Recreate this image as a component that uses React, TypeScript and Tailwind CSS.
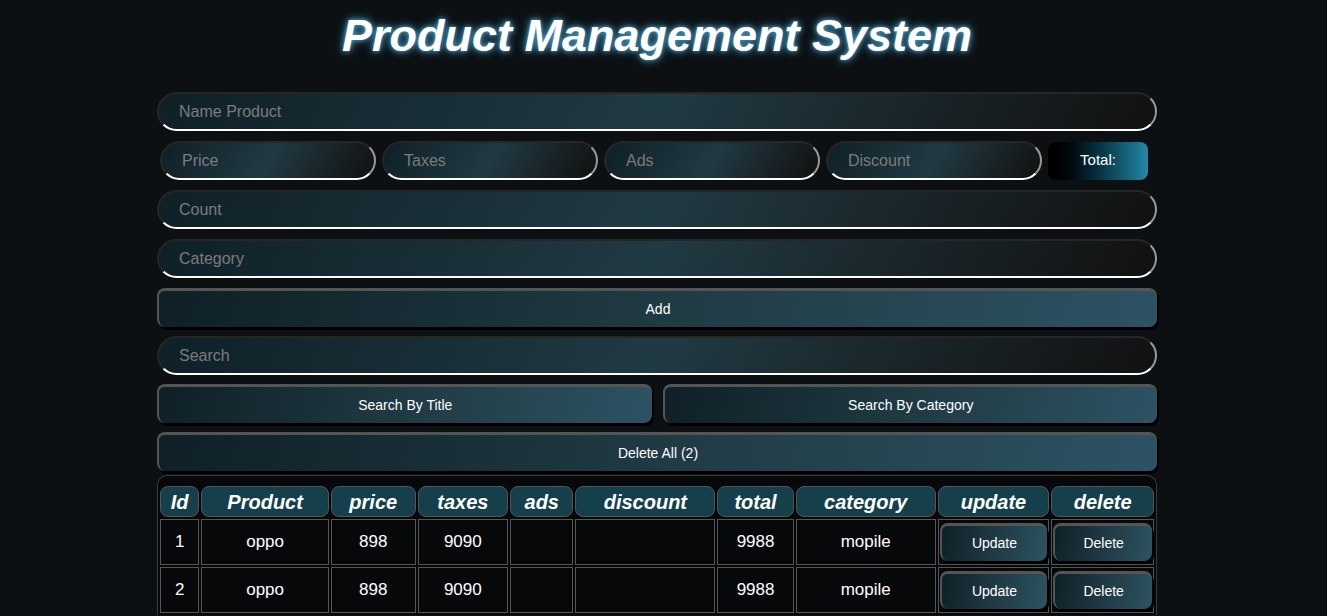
import { useState } from "react";

type Product = {
  id: number;
  title: string;
  price: string;
  taxes: string;
  ads: string;
  discount: string;
  total: string;
  category: string;
};

const inputCls =
  "h-[39px] rounded-[20px] border-2 border-t-[#262626] border-l-[#262626] border-r-[#9a9a9a] border-b-white bg-linear-120 from-[#0f2027] via-[#203a43] to-[#111] px-5 text-[16px] text-white placeholder:text-[#7b7b7b] outline-none";

const btnCls =
  "h-[39px] rounded-lg border-t-[3px] border-l-[2px] border-[#555] bg-linear-100 from-[#0f2027] via-[#203a43] to-[#2c5364] text-[14px] text-white shadow-[2px_3px_0_#000]";

const headers = ["Id", "Product", "price", "taxes", "ads", "discount", "total", "category", "update", "delete"];
const widths = ["w-[39px]", "w-[127px]", "w-[84px]", "w-[90px]", "w-[63px]", "w-[139px]", "w-[76px]", "w-[139px]", "w-[111px]", "w-[102px]"];

export default function App() {
  const [products] = useState<Product[]>([
    { id: 1, title: "oppo", price: "898", taxes: "9090", ads: "", discount: "", total: "9988", category: "mopile" },
    { id: 2, title: "oppo", price: "898", taxes: "9090", ads: "", discount: "", total: "9988", category: "mopile" },
  ]);

  return (
    <div className="min-h-screen bg-[#0c1012] pr-[13px] font-['Liberation_Sans',Arial,sans-serif]">
      <div className="mx-auto w-[1000px]">
        <h1 className="pt-[8px] pb-[28px] text-center text-[45px] leading-[56px] font-bold italic text-white [text-shadow:0_0_10px_rgba(70,170,220,0.9),0_0_4px_rgba(120,200,240,0.7)]">
          Product Management System
        </h1>

        <div className="flex flex-col gap-[10px]">
          <input className={inputCls} placeholder="Name Product" />

          <div className="flex items-center gap-[6px] px-[3px]">
            <input className={inputCls + " w-[216px]"} placeholder="Price" />
            <input className={inputCls + " w-[216px]"} placeholder="Taxes" />
            <input className={inputCls + " w-[216px]"} placeholder="Ads" />
            <input className={inputCls + " w-[216px]"} placeholder="Discount" />
            <div className="flex h-[38px] w-[100px] items-center justify-center rounded-lg bg-linear-to-r from-black to-[#2389a9] text-[15px] text-white">
              Total:
            </div>
          </div>

          <input className={inputCls} placeholder="Count" />
          <input className={inputCls} placeholder="Category" />
          <button className={btnCls}>Add</button>
        </div>

        <div className="mt-[9px] flex flex-col gap-[9px]">
          <input className={inputCls} placeholder="Search" />
          <div className="flex gap-[11px]">
            <button className={btnCls + " flex-1"}>Search By Title</button>
            <button className={btnCls + " flex-1"}>Search By Category</button>
          </div>
          <button className={btnCls}>Delete All ({products.length})</button>
        </div>

        <div className="mt-[4px] rounded-tl-[10px] rounded-tr-[10px] border border-b-0 border-[#3a3a3a] bg-[#07080a] pt-[8px]">
          <table className="w-full border-separate border-spacing-[2px] text-white">
            <thead>
              <tr>
                {headers.map((h, i) => (
                  <th
                    key={h}
                    className={
                      widths[i] +
                      " h-[31px] rounded-lg border border-[#555] bg-[#143f4b] text-[20px] leading-[20px] font-bold italic"
                    }
                  >
                    {h}
                  </th>
                ))}
              </tr>
            </thead>
            <tbody>
              {products.map((p) => (
                <tr key={p.id} className="text-center text-[17px]">
                  <td className="h-[46px] border border-[#555]">{p.id}</td>
                  <td className="border border-[#555]">{p.title}</td>
                  <td className="border border-[#555]">{p.price}</td>
                  <td className="border border-[#555]">{p.taxes}</td>
                  <td className="border border-[#555]">{p.ads}</td>
                  <td className="border border-[#555]">{p.discount}</td>
                  <td className="border border-[#555]">{p.total}</td>
                  <td className="border border-[#555]">{p.category}</td>
                  <td className="border border-[#555] p-[1px]">
                    <button className="h-[38px] w-full rounded-lg border-t-[3px] border-l-[2px] border-[#555] bg-linear-100 from-[#0f2027] via-[#203a43] to-[#2c5364] text-[14px] text-white shadow-[2px_3px_0_#000]">
                      Update
                    </button>
                  </td>
                  <td className="border border-[#555] p-[1px]">
                    <button className="h-[38px] w-full rounded-lg border-t-[3px] border-l-[2px] border-[#555] bg-linear-100 from-[#0f2027] via-[#203a43] to-[#2c5364] text-[14px] text-white shadow-[2px_3px_0_#000]">
                      Delete
                    </button>
                  </td>
                </tr>
              ))}
            </tbody>
          </table>
        </div>
      </div>
    </div>
  );
}
